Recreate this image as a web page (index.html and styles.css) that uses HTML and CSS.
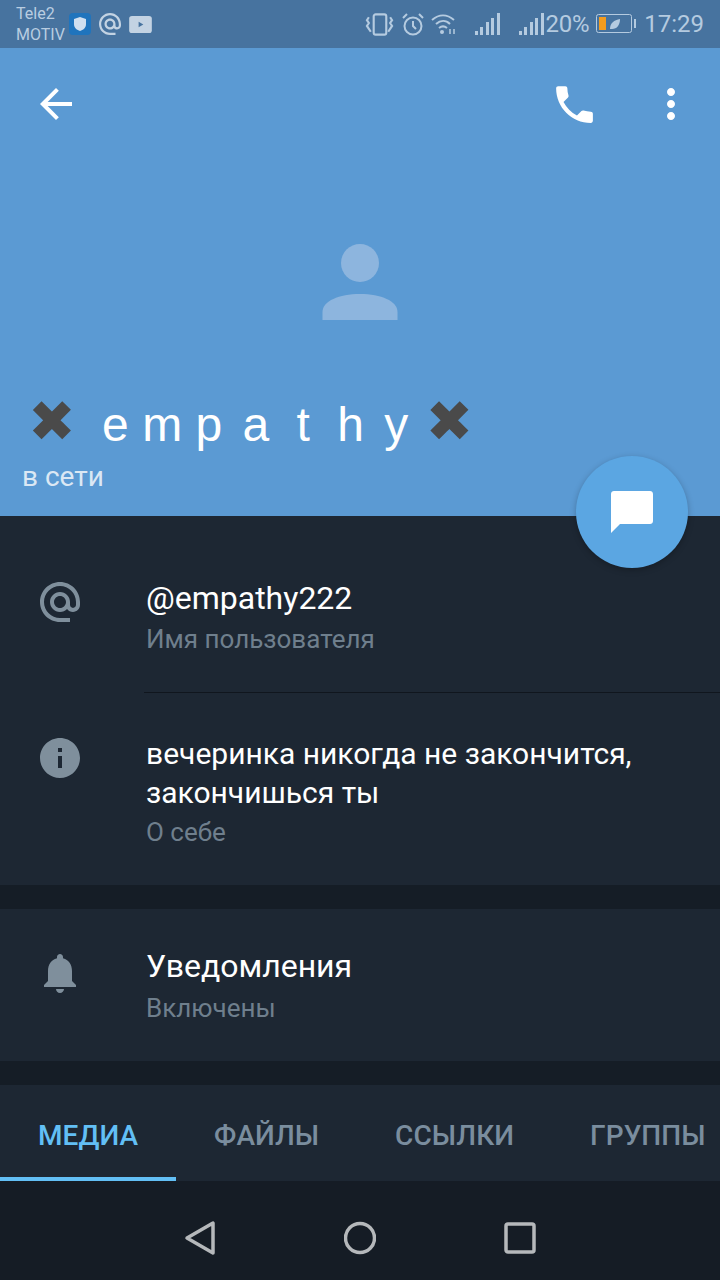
FILE: index.html
```html
<!DOCTYPE html>
<html lang="ru">
<head>
    <meta charset="UTF-8">
    <meta name="viewport" content="width=device-width, initial-scale=1.0">
    <title>empathy</title>
    <link rel="stylesheet" href="styles.css">
</head>
<body>
    <div class="statusbar">
        <div class="carrier">
            <span>Tele2</span>
            <span>MOTIV</span>
        </div>
        <svg class="st-shield" viewBox="0 0 22 22">
            <rect width="22" height="22" rx="4" fill="#1f74bd"/>
            <path d="M11 4l6 2v5c0 4-3 6-6 7-3-1-6-3-6-7V6z" fill="#cfdff0"/>
        </svg>
        <svg class="st-at" viewBox="2 2 20 20">
            <path fill="#c3d3e3" d="M12 2C6.48 2 2 6.48 2 12s4.48 10 10 10h5v-2h-5c-4.34 0-8-3.66-8-8s3.66-8 8-8 8 3.66 8 8v1.43c0 .79-.71 1.57-1.5 1.57s-1.5-.78-1.5-1.57V12c0-2.76-2.24-5-5-5s-5 2.24-5 5 2.24 5 5 5c1.38 0 2.64-.56 3.54-1.47.65.89 1.77 1.47 2.96 1.47 1.97 0 3.5-1.6 3.5-3.57V12c0-5.52-4.48-10-10-10zm0 13c-1.66 0-3-1.34-3-3s1.34-3 3-3 3 1.34 3 3-1.34 3-3 3z"/>
        </svg>
        <svg class="st-video" viewBox="0 0 24 18">
            <rect width="24" height="18" rx="3" fill="#c3d3e3"/>
            <path d="M10 6l5 3-5 3z" fill="#47739f"/>
        </svg>
        <div class="status-right">
            <svg class="st-vibrate" viewBox="0 0 30 24" fill="none" stroke="#b5cbe0" stroke-width="2.2">
                <rect x="9" y="2" width="13" height="21" rx="2"/>
                <path d="M4 5l-2 3 2 3-2 3 2 3 2 3 M26 5l2 3-2 3 2 3-2 3-2 3"/>
            </svg>
            <svg class="st-alarm" viewBox="0 0 22 24" fill="none" stroke="#b5cbe0" stroke-width="2">
                <circle cx="11" cy="14" r="8.5"/>
                <path d="M11 9v5l3 3 M1 6l4-4 M21 6l-4-4"/>
            </svg>
            <svg class="st-wifi" viewBox="0 0 26 22" fill="none" stroke="#b5cbe0" stroke-width="2">
                <path d="M1 7c7-6 15-6 22 0 M5 11c4.500-4 10-4 14 0 M8 15c2.500-2 5.500-2 8 0"/>
                <circle cx="11" cy="19" r="2" fill="#b5cbe0" stroke="none"/>
                <path d="M19 16v5 M23 16v5" stroke-width="1.500"/>
            </svg>
            <svg class="st-signal" viewBox="0 0 25 22" fill="#b5cbe0">
                <rect x="0" y="18" width="3" height="4"/>
                <rect x="5" y="14" width="3" height="8"/>
                <rect x="11" y="9" width="3" height="13"/>
                <rect x="16" y="5" width="3" height="17"/>
                <rect x="22" y="0" width="3" height="22"/>
            </svg>
            <svg class="st-signal second" viewBox="0 0 25 22" fill="#b5cbe0">
                <rect x="0" y="18" width="3" height="4"/>
                <rect x="5" y="14" width="3" height="8"/>
                <rect x="11" y="9" width="3" height="13"/>
                <rect x="16" y="5" width="3" height="17"/>
                <rect x="22" y="0" width="3" height="22"/>
            </svg>
            <span class="st-percent">20%</span>
            <svg class="st-battery" viewBox="0 0 40 20">
                <rect x="0.500" y="0.500" width="35" height="18" rx="2" fill="none" stroke="#b5cbe0"/>
                <rect x="3" y="3" width="7" height="13" fill="#f39c1f"/>
                <path d="M14 15c0-6 4-9 10-10 0 6-3 10-8 10z" fill="#b5cbe0"/>
                <rect x="38" y="5" width="2" height="9" fill="#b5cbe0"/>
            </svg>
            <span class="st-time">17:29</span>
        </div>
    </div>

    <div class="header">
        <div class="toolbar">
            <svg class="tool-icon" viewBox="0 0 24 24">
                <path d="M20 11H7.830l5.590-5.590L12 4l-8 8 8 8 1.410-1.410L7.830 13H20v-2z"/>
            </svg>
            <svg class="tool-icon phone" viewBox="0 0 24 24">
                <path d="M6.620 10.790c1.440 2.830 3.760 5.140 6.590 6.590l2.200-2.200c.27-.27.67-.36 1.020-.24 1.120.37 2.330.57 3.570.57.55 0 1 .45 1 1V20c0 .55-.45 1-1 1-9.390 0-17-7.610-17-17 0-.55.45-1 1-1h3.500c.55 0 1 .45 1 1 0 1.250.2 2.450.57 3.570.11.35.03.74-.25 1.020l-2.200 2.200z"/>
            </svg>
            <svg class="tool-icon more" viewBox="0 0 24 24">
                <path d="M12 8c1.100 0 2-.9 2-2s-.9-2-2-2-2 .9-2 2 .9 2 2 2zm0 2c-1.100 0-2 .9-2 2s.9 2 2 2 2-.9 2-2-.9-2-2-2zm0 6c-1.100 0-2 .9-2 2s.9 2 2 2 2-.9 2-2-.9-2-2-2z"/>
            </svg>
        </div>
        <svg class="avatar" viewBox="0 0 76 76">
            <circle cx="38" cy="19" r="19"/>
            <path d="M.5 76V68C.5 57 17 50 38 50s37.500 7 37.500 18v8z"/>
        </svg>
        <div class="name"><span class="cross first">✖</span> e m p <span class="gap-s">a</span> <span class="gap-l">t</span> <span class="gap-l">h</span> <span class="gap-s">y</span> <span class="cross">✖</span></div>
        <div class="online">в сети</div>
        <div class="fab">
            <svg viewBox="0 0 42 42">
                <path d="M3 0h36c1.700 0 3 1.300 3 3v27c0 1.700-1.300 3-3 3H9L0 42V3c0-1.700 1.300-3 3-3z"/>
            </svg>
        </div>
    </div>

    <div class="section">
        <div class="row row-user">
            <svg class="row-icon" viewBox="0 0 24 24">
                <path d="M12 2C6.480 2 2 6.480 2 12s4.480 10 10 10h5v-2h-5c-4.340 0-8-3.660-8-8s3.660-8 8-8 8 3.660 8 8v1.430c0 .79-.71 1.570-1.500 1.570s-1.500-.78-1.500-1.570V12c0-2.760-2.240-5-5-5s-5 2.240-5 5 2.240 5 5 5c1.380 0 2.640-.56 3.540-1.470.65.89 1.770 1.470 2.960 1.470 1.970 0 3.500-1.600 3.500-3.570V12c0-5.520-4.480-10-10-10zm0 13c-1.660 0-3-1.340-3-3s1.340-3 3-3 3 1.340 3 3-1.340 3-3 3z"/>
            </svg>
            <div class="row-text">
                <div class="value big">@empathy222</div>
                <div class="label">Имя пользователя</div>
            </div>
        </div>
        <div class="divider"></div>
        <div class="row row-about">
            <svg class="row-icon" viewBox="0 0 24 24">
                <path fill-rule="evenodd" d="M12 2C6.480 2 2 6.480 2 12s4.480 10 10 10 10-4.480 10-10S17.520 2 12 2zm-1 5h2v2h-2zm0 4h2v6h-2z"/>
            </svg>
            <div class="row-text">
                <div class="value">вечеринка никогда не закончится, закончишься ты</div>
                <div class="label">О себе</div>
            </div>
        </div>
    </div>

    <div class="section gap">
        <div class="row row-notify">
            <svg class="row-icon bell" viewBox="0 0 24 24">
                <path d="M12 22c1.100 0 2-.9 2-2h-4c0 1.100.89 2 2 2zm6-6v-5c0-3.070-1.640-5.640-4.500-6.320V4c0-.83-.67-1.500-1.500-1.500s-1.500.67-1.500 1.500v.68C7.630 5.360 6 7.920 6 11v5l-2 2v1h16v-1l-2-2z"/>
            </svg>
            <div class="row-text">
                <div class="value big">Уведомления</div>
                <div class="label">Включены</div>
            </div>
        </div>
    </div>

    <div class="tabs gap">
        <div class="tab active">МЕДИА</div>
        <div class="tab">ФАЙЛЫ</div>
        <div class="tab">ССЫЛКИ</div>
        <div class="tab">ГРУППЫ</div>
    </div>

    <div class="navbar">
        <svg class="nav-icon" viewBox="0 0 32 36">
            <path d="M29 3v30L3 18z"/>
        </svg>
        <svg class="nav-icon" viewBox="0 0 32 36">
            <circle cx="16" cy="18" r="14.500"/>
        </svg>
        <svg class="nav-icon" viewBox="0 0 32 36">
            <rect x="2" y="4" width="28" height="28" rx="2"/>
        </svg>
    </div>
</body>
</html>
```

FILE: styles.css
```css
html,body{
    margin:0px;
    padding:0px;
}
body{
    width:720px;
    height:1280px;
    overflow:hidden;
    background-color:#151d26;
    font-family:Roboto,"Noto Sans",sans-serif;
}
.statusbar{
    height:48px;
    background-color:#47739f;
    display:flex;
    align-items:center;
    padding-left:16px;
    color:#b5cbe0;
    box-sizing:border-box;
}
.carrier{
    width:53px;
    display:flex;
    flex-direction:column;
    font-size:16px;
    line-height:21px;
    color:#b9cde1;
}
.st-shield{
    width:22px;
    height:22px;
    margin-top:-1px;
}
.st-at{
    width:22px;
    height:22px;
    margin-left:8px;
    margin-top:-1px;
}
.st-video{
    width:23px;
    height:17px;
    margin-left:8px;
}
.status-right{
    margin-left:auto;
    padding-right:16px;
    display:flex;
    align-items:center;
}
.st-vibrate{
    width:29px;
    height:24px;
}
.st-alarm{
    width:22px;
    height:24px;
    margin-left:8px;
}
.st-wifi{
    width:26px;
    height:22px;
    margin-left:7px;
}
.st-signal{
    width:25px;
    height:22px;
    margin-left:18px;
}
.st-signal.second{
    margin-left:19px;
}
.st-percent{
    font-size:24px;
    margin-left:2px;
    letter-spacing:-.3px;
}
.st-battery{
    width:40px;
    height:20px;
    margin-left:7px;
}
.st-time{
    font-size:24px;
    margin-left:8px;
}

.header{
    position:relative;
    height:468px;
    background-color:#5b9ad3;
    color:white;
}
.toolbar{
    display:flex;
    align-items:center;
    height:48px;
    padding:32px 25px 0px 32px;
}
.tool-icon{
    width:48px;
    height:48px;
    fill:white;
}
.tool-icon.phone{
    width:49px;
    height:49px;
    margin-left:auto;
    margin-right:48px;
}
.avatar{
    display:block;
    width:76px;
    height:76px;
    margin:116px auto 0px;
    fill:#8db5de;
}
.name{
    margin-top:77px;
    padding-left:28px;
    font-family:"Liberation Sans",Arial,sans-serif;
    font-size:48px;
    line-height:56px;
    white-space:pre;
}
.cross{
    font-family:"DejaVu Sans",sans-serif;
    font-size:57px;
    line-height:40px;
    color:#4a4a4a;
    margin-left:4px;
}
.cross.first{
    margin-left:0px;
    margin-right:13px;
}
.gap-s{
    margin-left:7px;
}
.gap-l{
    margin-left:14px;
}
.online{
    margin-top:6px;
    padding-left:22px;
    font-size:28px;
    line-height:36px;
    color:#dbe8f4;
}
.fab{
    position:absolute;
    left:576px;
    top:408px;
    width:112px;
    height:112px;
    border-radius:50%;
    background-color:#5ba6e2;
    box-shadow:0px 2px 6px rgba(0,0,0,.25);
    display:flex;
    align-items:center;
    justify-content:center;
}
.fab>svg{
    width:42px;
    height:42px;
    fill:white;
}

.section{
    background-color:#1d2733;
}
.gap{
    margin-top:24px;
}
.row{
    display:flex;
    padding:0px 36px 35px 36px;
}
.row-user{
    padding-top:62px;
}
.row-about{
    padding-top:41px;
}
.row-notify{
    padding-top:37px;
}
.row-icon{
    flex:none;
    width:48px;
    height:48px;
    fill:#7f8f9c;
    margin-right:62px;
}
.row-icon.bell{
    margin-top:3px;
}
.row-text{
    flex:1;
}
.value{
    font-size:30px;
    line-height:39px;
    color:white;
}
.value.big{
    font-size:32px;
    line-height:40px;
}
.label{
    font-size:26px;
    line-height:36px;
    margin-top:2px;
    color:#6f7f8d;
}
.value.big+.label{
    margin-top:3px;
}
.row-notify .value.big+.label{
    margin-top:4px;
}
.divider{
    height:1px;
    margin-left:144px;
    background-color:#10161e;
}

.tabs{
    height:96px;
    box-sizing:border-box;
    background-color:#1d2733;
    display:flex;
    overflow:hidden;
}
.tab{
    flex:none;
    padding:0px 38px;
    line-height:102px;
    font-size:28px;
    font-weight:500;
    letter-spacing:.05px;
    color:#7a8d9e;
    box-sizing:border-box;
}
.tab.active{
    color:#62bff5;
    border-bottom:4px solid #62bff5;
    height:96px;
}

.navbar{
    height:99px;
    background-color:#151c25;
    display:flex;
    align-items:center;
    justify-content:center;
    gap:128px;
    padding-top:15px;
    box-sizing:border-box;
}
.nav-icon{
    width:32px;
    height:36px;
    fill:none;
    stroke:#b5b8bb;
    stroke-width:3.500;
    stroke-linejoin:round;
}
```
